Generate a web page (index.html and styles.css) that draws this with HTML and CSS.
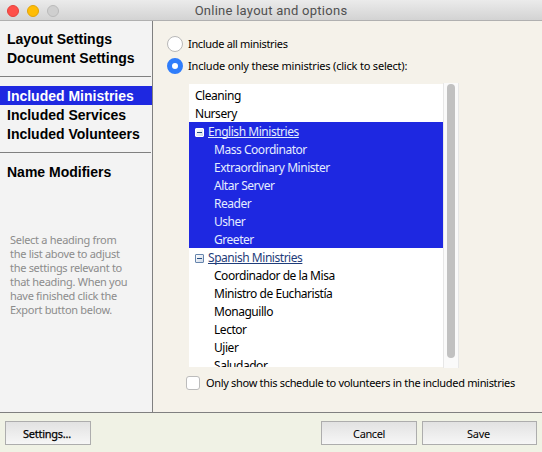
FILE: index.html
```html
<!DOCTYPE html>
<html lang="en">
<head>
<meta charset="utf-8">
<title>Online layout and options</title>
<link rel="stylesheet" href="styles.css">
</head>
<body>
<div class="window">
  <header class="titlebar">
    <div class="lights"><i class="light red"></i><i class="light yellow"></i><i class="light grey"></i></div>
    <h1 class="title">Online layout and options</h1>
  </header>
  <div class="body">
    <nav class="sidebar">
      <ul class="group">
        <li>Layout Settings</li>
        <li>Document Settings</li>
      </ul>
      <ul class="group middle">
        <li class="active">Included Ministries</li>
        <li>Included Services</li>
        <li>Included Volunteers</li>
      </ul>
      <ul class="group last">
        <li>Name Modifiers</li>
      </ul>
      <p class="hint">Select a heading from<br>the list above to adjust<br>the settings relevant to<br>that heading. When you<br>have finished click the<br>Export button below.</p>
    </nav>
    <main class="content">
      <div class="option all"><span class="radio"></span><span class="label">Include all ministries</span></div>
      <div class="option"><span class="radio on"></span><span class="label">Include only these ministries (click to select):</span></div>
      <div class="list">
        <ul class="rows">
          <li>Cleaning</li>
          <li>Nursery</li>
          <li class="sel head"><i class="box"></i><u>English Ministries</u></li>
          <li class="sel sub">Mass Coordinator</li>
          <li class="sel sub">Extraordinary Minister</li>
          <li class="sel sub">Altar Server</li>
          <li class="sel sub">Reader</li>
          <li class="sel sub">Usher</li>
          <li class="sel sub">Greeter</li>
          <li class="head"><i class="box"></i><u>Spanish Ministries</u></li>
          <li class="sub">Coordinador de la Misa</li>
          <li class="sub">Ministro de Eucharistía</li>
          <li class="sub">Monaguillo</li>
          <li class="sub">Lector</li>
          <li class="sub">Ujier</li>
          <li class="sub">Saludador</li>
        </ul>
        <div class="track"><div class="thumb"></div></div>
      </div>
      <div class="check"><span class="checkbox"></span><span class="label">Only show this schedule to volunteers in the included ministries</span></div>
    </main>
  </div>
  <footer class="footer">
    <button class="btn settings">Settings...</button>
    <button class="btn cancel">Cancel</button>
    <button class="btn save">Save</button>
  </footer>
</div>
</body>
</html>
```
FILE: styles.css
```css
* { box-sizing: border-box; }
body { margin: 0; font-family: "Noto Sans", sans-serif; font-size: 12px; color: #000; }
ul, p, h1 { margin: 0; padding: 0; }
ul { list-style: none; }
.window { width: 542px; height: 452px; display: flex; flex-direction: column; overflow: hidden; background: #f5f2ea; }
.titlebar { height: 21px; flex: none; display: grid; grid-template-columns: 1fr auto 1fr; align-items: center; background: linear-gradient(#ebebeb, #d3d3d3); border-bottom: 1px solid #b0b0b0; }
.lights { display: flex; gap: 8px; padding-left: 7px; }
.light { width: 12px; height: 12px; border-radius: 50%; border: 1px solid; }
.red { background: #fe4f49; border-color: #e5413b; }
.yellow { background: #ffbd05; border-color: #e2a408; }
.grey { background: #cfcfcf; border-color: #bababa; }
.title { font: 400 13px/20px Roboto, sans-serif; padding-top: 1px; color: #505050; letter-spacing: .26px; white-space: nowrap; }
.body { flex: 1; display: flex; min-height: 0; }
.sidebar { width: 153px; flex: none; background: #f3f3f3; border-right: 1px solid #808080; }
.group { padding: 8px 0 9px; border-bottom: 1px solid #808080; margin-right: 1px; font: 700 14px/21px "Liberation Sans", Arial, sans-serif; }
.group li { padding-left: 7px; height: 19px; white-space: nowrap; }
.group li.active { background: #1e28e1; color: #fff; margin-right: -1px; }
.group.middle { padding-top: 9px; }
.group.last { border: 0; padding: 9px 0 0; }
.hint { padding: 52px 0 0 10px; font-size: 11px; line-height: 14px; letter-spacing: -.3px; color: #8c8c8c; white-space: nowrap; }
.content { flex: 1; padding: 15px 0 0 14px; }
.option { display: flex; align-items: center; gap: 5px; height: 16px; margin-bottom: 6px; font-size: 11px; letter-spacing: -.2px; white-space: nowrap; }
.option.all { letter-spacing: -.33px; }
.label { padding-bottom: 2px; }
.radio { width: 16px; height: 16px; border-radius: 50%; background: #fff; border: 1px solid #b8b8b8; }
.radio.on { border: 5px solid #2f7dfb; }
.list { display: flex; width: 270px; height: 285px; margin: 9px 0 0 22px; }
.rows { width: 254px; height: 283px; margin-top: 1px; overflow: hidden; background: #fff; padding-top: 2px; letter-spacing: -.46px; }
.rows li { height: 18px; line-height: 20px; padding-left: 6px; white-space: nowrap; }
.rows .sub { padding-left: 25px; }
.rows .head { display: flex; gap: 4px; color: #1f3d7a; }
.rows .sel { background: #1e28e1; color: #e4ecff; }
.head u { text-underline-offset: 1px; text-decoration-thickness: 1px; text-decoration-skip-ink: none; }
.box { width: 9px; height: 9px; margin-top: 6px; border: 1px solid #6685ad; border-radius: 1px; background: linear-gradient(#244d82, #244d82) center / 5px 1px no-repeat, linear-gradient(135deg, #fff, #cfd9e8); }
.sel .box { border-color: #fff; }
.track { width: 16px; background: #fafafa; border: solid #e7e7e7; border-width: 0 1px; padding: 1px 3px 0; }
.thumb { width: 8px; height: 274px; border-radius: 4px; background: #c1c1c1; }
.check { display: flex; align-items: center; gap: 6px; margin: 8px 0 0 19px; font-size: 11px; letter-spacing: -.315px; height: 14px; white-space: nowrap; }
.checkbox { width: 14px; height: 14px; border: 1px solid #bcbcbc; border-radius: 3px; background: #fff; }
.footer { height: 40px; flex: none; display: flex; border-top: 1px solid #808080; background: #f0f2e5; padding: 8px 5px; gap: 5px; }
.btn { height: 24px; border: 1px solid #adadad; background: linear-gradient(#e2e2e2, #f6f6f6); font: 11px/20px "Noto Sans", sans-serif; letter-spacing: -.4px; color: #000; padding: 1px 0 0; }
.settings { width: 86px; margin-right: auto; padding-right: 2px; letter-spacing: -.25px; -webkit-text-stroke: .25px #000; }
.cancel { width: 96px; }
.save { width: 115px; padding-right: 2px; letter-spacing: -.2px; }
```
